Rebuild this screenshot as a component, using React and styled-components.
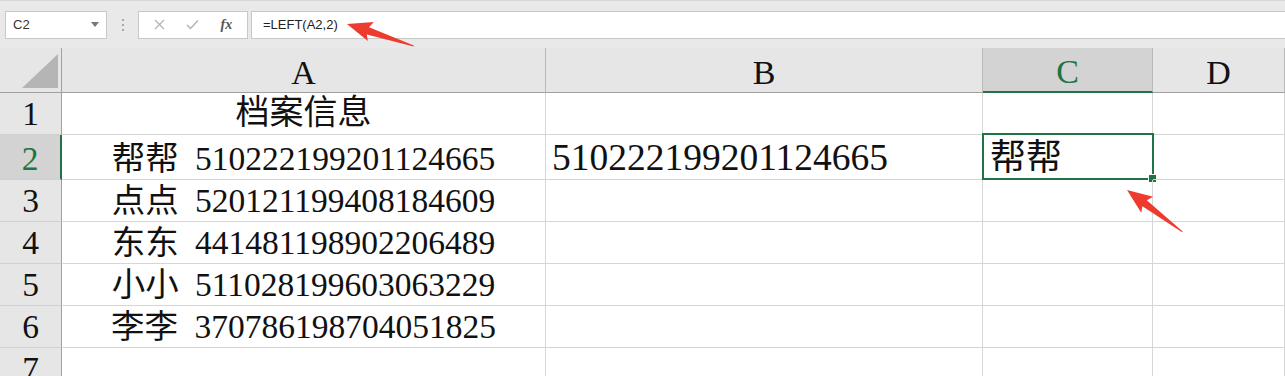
import React from 'react'
import styled, { createGlobalStyle } from 'styled-components'

const Global = createGlobalStyle`
    html, body {
        margin: 0;
        padding: 0;
        background: #fff;
        overflow: hidden;
    }
    * { box-sizing: border-box; }
`

const Page = styled.div`
    position: relative;
    width: 1285px;
    height: 376px;
    overflow: hidden;
    font-family: "Liberation Serif", "Noto Sans CJK SC", serif;
`

const Toolbar = styled.div`
    height: 48px;
    display: flex;
    align-items: center;
    padding-left: 5px;
    background: #e9e9e9;
    border-top: 1px solid #d6d6d6;
`

const Box = styled.div`
    height: 28px;
    background: #fff;
    border: 1px solid #c8c8c8;
    display: flex;
    align-items: center;
`

const NameBox = styled(Box)`
    width: 102px;
    padding: 0 7px 0 7px;
    justify-content: space-between;
    font-family: "Liberation Sans", "Noto Sans", sans-serif;
    font-size: 13px;
    color: #333;
`

const Grip = styled.div`
    width: 31px;
    display: flex;
    flex-direction: column;
    align-items: center;
    gap: 3px;
    span {
        width: 2px;
        height: 2px;
        background: #a8a8a8;
    }
`

const Buttons = styled(Box)`
    width: 110px;
    justify-content: space-around;
    padding: 0 4px;
`

const ToolIcon = styled.span`
    width: 22px;
    display: flex;
    justify-content: center;
    color: ${p => p.$dark ? '#555' : '#b4b4b4'};
`

const Fx = styled.span`
    font-family: "Liberation Serif", serif;
    font-style: italic;
    font-weight: bold;
    font-size: 14px;
    color: #555;
`

const FormulaBox = styled(Box)`
    flex: 1;
    margin-left: 3px;
    border-right: none;
    padding-left: 11px;
    font-family: "Liberation Sans", "Noto Sans", sans-serif;
    font-size: 13px;
    color: #222;
`

const Sheet = styled.div`
    display: grid;
    grid-template-columns: 62px 484px 437px 170px 132px;
    grid-template-rows: 45px 42px 45px 42px 42px 42px 42px 42px;
`

const Cell = styled.div`
    position: relative;
    display: flex;
    align-items: flex-end;
    justify-content: ${p => p.$align || 'flex-start'};
    padding: 0 ${p => p.$pad || 0}px ${p => p.$bottom ?? 4}px;
    border-right: 1px solid #d6d6d6;
    border-bottom: 1px solid #d6d6d6;
    font-size: ${p => p.$size || 33.5}px;
    line-height: 1;
    color: #111;
    white-space: pre;
    word-spacing: 8px;
`

const ColHead = styled(Cell)`
    justify-content: center;
    padding-bottom: 2px;
    background: ${p => p.$active ? '#d3d3d3' : '#e6e6e6'};
    color: ${p => p.$active ? '#217346' : '#111'};
    border-right-color: #b9b9b9;
    border-bottom: ${p => p.$active ? '2px solid #217346' : '1px solid #a0a0a0'};
    font-size: 34px;
`

const RowHead = styled(Cell)`
    justify-content: center;
    background: ${p => p.$active ? '#d3d3d3' : '#e6e6e6'};
    color: ${p => p.$active ? '#217346' : '#111'};
    border-right: ${p => p.$active ? '2px solid #217346' : '1px solid #a0a0a0'};
    border-bottom-color: #d0d0d0;
`

const Corner = styled(ColHead)`
    border-right: 1px solid #a0a0a0;
    align-items: stretch;
    padding: 0;
`

const Selected = styled.div`
    position: absolute;
    left: -1px;
    top: -2px;
    right: -2px;
    bottom: -1px;
    border: 2px solid #217346;
    pointer-events: none;
    &::after {
        content: '';
        position: absolute;
        right: -5px;
        bottom: -5px;
        width: 7px;
        height: 7px;
        background: #217346;
        border: 1px solid #fff;
    }
`

const Overlay = styled.svg`
    position: absolute;
    left: 0;
    top: 0;
    pointer-events: none;
`

const people = [
    ['帮帮', '510222199201124665'],
    ['点点', '520121199408184609'],
    ['东东', '441481198902206489'],
    ['小小', '511028199603063229'],
    ['李李', '370786198704051825'],
]

const Arrow = ({ tipX, tipY, tailX, tailY }) => {
    const dx = tailX - tipX
    const dy = tailY - tipY
    const len = Math.sqrt(dx * dx + dy * dy)
    const angle = Math.atan2(dy, dx) * 180 / Math.PI
    return (
        <polygon
            transform={`translate(${tipX} ${tipY}) rotate(${angle})`}
            points={`0,0 25,-10 22,-3.5 ${len},0.5 ${len},1.5 22,4 25,10`}
            fill="#ee3b2f"
        />
    )
}

const App = () => {
    const rows = [
        ['1', [<Cell key="a" $align="center" $size={34}>档案信息</Cell>, <Cell key="b" />, <Cell key="c" />, <Cell key="d" />]],
        ...people.map(([name, id], i) => [
            String(i + 2),
            [
                <Cell key="a" $align="center">{`${name} ${id}`}</Cell>,
                <Cell key="b" $pad={6} $size={37.5} $bottom={3}>{i === 0 ? id : ''}</Cell>,
                <Cell key="c" $pad={7} $size={36} $bottom={3}>
                    {i === 0 ? name : ''}
                    {i === 0 && <Selected />}
                </Cell>,
                <Cell key="d" />,
            ],
        ]),
        ['7', [<Cell key="a" />, <Cell key="b" />, <Cell key="c" />, <Cell key="d" />]],
    ]

    return (
        <Page>
            <Global />
            <Toolbar>
                <NameBox>
                    C2
                    <svg width="8" height="5" viewBox="0 0 8 5"><polygon points="0,0 8,0 4,5" fill="#777" /></svg>
                </NameBox>
                <Grip><span /><span /><span /></Grip>
                <Buttons>
                    <ToolIcon>
                        <svg width="11" height="11" viewBox="0 0 11 11"><path d="M1 1L10 10M10 1L1 10" stroke="currentColor" strokeWidth="1.3" /></svg>
                    </ToolIcon>
                    <ToolIcon>
                        <svg width="13" height="11" viewBox="0 0 13 11"><path d="M1 6L4.5 9.5L12 1.5" stroke="currentColor" strokeWidth="1.5" fill="none" /></svg>
                    </ToolIcon>
                    <ToolIcon $dark><Fx>fx</Fx></ToolIcon>
                </Buttons>
                <FormulaBox>=LEFT(A2,2)</FormulaBox>
            </Toolbar>
            <Sheet>
                <Corner>
                    <svg width="61" height="44" viewBox="0 0 61 44"><polygon points="58,6 58,40 22,40" fill="#b5b5b5" /></svg>
                </Corner>
                <ColHead>A</ColHead>
                <ColHead>B</ColHead>
                <ColHead $active>C</ColHead>
                <ColHead>D</ColHead>
                {rows.map(([num, cells]) => (
                    <React.Fragment key={num}>
                        <RowHead $active={num === '2'}>{num}</RowHead>
                        {cells}
                    </React.Fragment>
                ))}
            </Sheet>
            <Overlay width="1285" height="376">
                <Arrow tipX={347} tipY={24} tailX={414} tailY={45} />
                <Arrow tipX={1127} tipY={190} tailX={1183} tailY={231} />
            </Overlay>
        </Page>
    )
}

export default App
